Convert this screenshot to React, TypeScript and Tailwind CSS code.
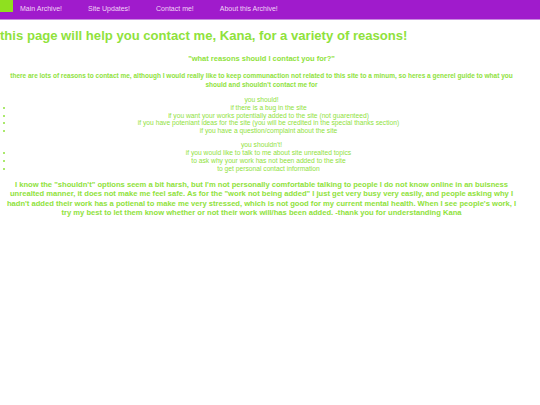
import React from 'react';

const links = ['Main Archive!', 'Site Updates!', 'Contact me!', 'About this Archive!'];

const should = [
  'if there is a bug in the site',
  'if you want your works potentially added to the site (not guarenteed)',
  'if you have poteniant ideas for the site (you will be credited in the special thanks section)',
  'if you have a question/complaint about the site',
];

const shouldnt = [
  'if you would like to talk to me about site unrealted topics',
  'to ask why your work has not been added to the site',
  'to get personal contact information',
];

const List: React.FC<{ items: string[] }> = ({ items }) => (
  <ul className="list-disc pl-[14px] marker:text-[#8fe23c]">
    {items.map((item) => (
      <li key={item} className="text-center leading-[7.8px]">
        {item}
      </li>
    ))}
  </ul>
);

export default function App() {
  return (
    <div className="min-h-[405px] bg-white font-['Liberation_Sans',Arial,sans-serif] text-[#8fe23c]">
      <nav className="flex h-[20px] items-start border-b border-[#c98ae0] bg-[#a01bcc]">
        <div className="h-[12px] w-[13px] bg-[#8fe01f]" />
        <div className="ml-[7px] flex h-[19px] items-center gap-[26px] text-[7px] text-[#f1d6f6]">
          {links.map((l) => (
            <a key={l}>{l}</a>
          ))}
        </div>
      </nav>

      <div className="w-[523px]">
        <h1 className="mt-[8px] text-[13.1px] font-bold leading-[16px]">
          this page will help you contact me, Kana, for a variety of reasons!
        </h1>

        <h3 className="mt-[10px] text-center text-[7.5px] font-bold leading-[10px]">
          "what reasons should I contact you for?"
        </h3>

        <p className="mt-[7px] px-[4px] text-center text-[6.5px] font-bold leading-[9px]">
          there are lots of reasons to contact me, although I would really like to keep communaction not related to this site to a minum, so heres a generel guide to what you should and shouldn't contact me for
        </p>

        <div className="mt-[7px] text-[6.7px] leading-[7.8px]">
          <p className="text-center">you should!</p>
          <List items={should} />
          <p className="mt-[6.3px] text-center">you shouldn't!</p>
          <List items={shouldnt} />
        </div>

        <p className="mt-[7.6px] px-[4px] text-center text-[7.6px] font-bold leading-[9.4px]">
          I know the "shouldn't" options seem a bit harsh, but I'm not personally comfortable talking to people I do not know online in an buisness unrealted manner, it does not make me feel safe. As for the "work not being added" I just get very busy very easily, and people asking why I hadn't added their work has a potienal to make me very stressed, which is not good for my current mental health. When I see people's work, I try my best to let them know whether or not their work will/has been added. -thank you for understanding Kana
        </p>
      </div>
    </div>
  );
}
